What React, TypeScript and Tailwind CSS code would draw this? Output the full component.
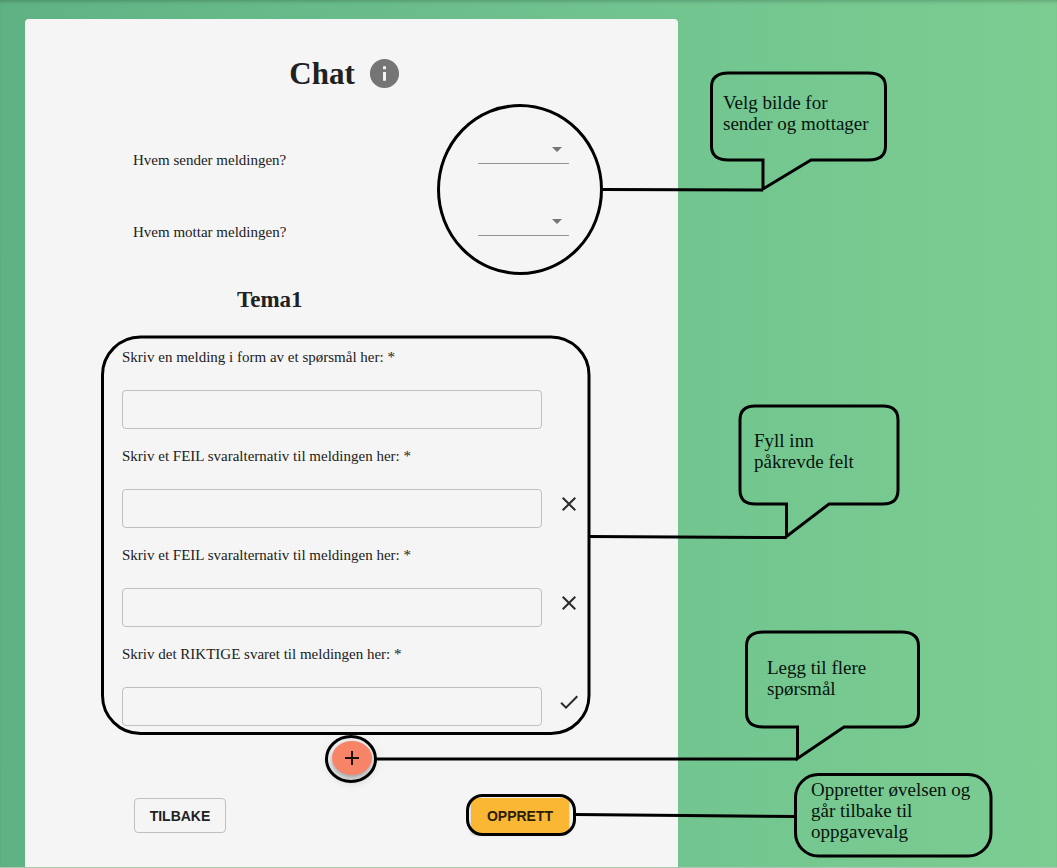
import type { ReactNode } from "react";

function Icon({ d, className }: { d: string; className: string }) {
  return (
    <svg viewBox="0 0 24 24" fill="currentColor" aria-hidden="true" className={className}>
      <path d={d} />
    </svg>
  );
}

const ICONS = {
  info: "M12 2C6.48 2 2 6.48 2 12s4.48 10 10 10 10-4.48 10-10S17.52 2 12 2zm1 15h-2v-6h2v6zm0-8h-2V7h2v2z",
  close:
    "M19 6.41L17.59 5 12 10.59 6.41 5 5 6.41 10.59 12 5 17.59 6.41 19 12 13.41 17.59 19 19 17.59 13.41 12z",
  check: "M9 16.17L4.83 12l-1.42 1.41L9 19 21 7l-1.41-1.41z",
  add: "M19 13h-6v6h-2v-6H5v-2h6V5h2v6h6v2z",
  arrow: "M7 10l5 5 5-5z",
};

function PersonSelect({ id, label }: { id: string; label: string }) {
  return (
    <div className="flex h-[72px] items-center justify-between">
      <label htmlFor={id} className="text-[15px] leading-6">
        {label}
      </label>
      <div className="relative mb-[26px] w-[91px] border-b border-[#949494] text-[#757575]">
        <select id={id} className="h-8 w-full appearance-none bg-transparent pr-6" defaultValue="">
          <option value=""></option>
        </select>
        <Icon d={ICONS.arrow} className="pointer-events-none absolute right-0 bottom-0.5 size-6" />
      </div>
    </div>
  );
}

function AnswerField({ id, label, icon }: { id: string; label: string; icon?: string }) {
  return (
    <div className="mb-[15px]">
      <label htmlFor={id} className="mb-[21px] block text-[15px] leading-6">
        {label} *
      </label>
      <div className="flex gap-[15px]">
        <input
          id={id}
          type="text"
          required
          className="h-[39px] min-w-0 flex-1 rounded border border-[#c0c0c0] bg-transparent px-3"
        />
        <span className="flex h-[30px] w-6 items-center text-[#2b2b2b]">
          {icon && <Icon d={icon} className="size-6" />}
        </span>
      </div>
    </div>
  );
}

function Note({ className, children }: { className: string; children: ReactNode }) {
  return (
    <p className={`absolute text-[19px] leading-[21px] whitespace-nowrap text-[#07130c] ${className}`}>
      {children}
    </p>
  );
}

function Annotations() {
  return (
    <div className="pointer-events-none absolute top-0 left-0">
      <svg width="1057" height="868" fill="none" stroke="#000" strokeWidth="3" aria-hidden="true">
        <ellipse cx="520" cy="189.5" rx="81.5" ry="84" />
        <path d="M602 189.5L763 190" />
        <path d="M728.5 73H868.5Q885.5 73 885.5 87V146Q885.5 160 868.5 160H811L763 189V160H728.5Q711.5 160 711.5 146V87Q711.5 73 728.5 73Z" />

        <rect x="102.5" y="337" width="486.5" height="396.5" rx="38" />
        <path d="M589 536.5L786.5 537.5" />
        <path d="M755 406H883Q898 406 898 420V490Q898 504 883 504H829L786.5 536.5V504H755Q740 504 740 490V420Q740 406 755 406Z" />

        <ellipse cx="351" cy="759" rx="24.5" ry="22.5" />
        <path d="M376 759H797.5" />
        <path d="M763.5 632H901.5Q918.5 632 918.5 646V713Q918.5 727 901.5 727H844L797.5 758.5V727H763.5Q746.5 727 746.5 713V646Q746.5 632 763.5 632Z" />

        <rect x="467.5" y="795.5" width="107" height="39" rx="15" />
        <path d="M575 814.5L795.5 816.5" />
        <rect x="795.5" y="774.5" width="195.5" height="81.5" rx="23" />
      </svg>
      <Note className="top-[92px] left-[723px]">
        Velg bilde for
        <br />
        sender og mottager
      </Note>
      <Note className="top-[430px] left-[754px]">
        Fyll inn
        <br />
        påkrevde felt
      </Note>
      <Note className="top-[657px] left-[767px]">
        Legg til flere
        <br />
        spørsmål
      </Note>
      <Note className="top-[779px] left-[811px]">
        Oppretter øvelsen og
        <br />
        går tilbake til
        <br />
        oppgavevalg
      </Note>
    </div>
  );
}

export default function App() {
  return (
    <div className="relative min-h-screen overflow-x-hidden border-b border-[#a9c9b3] bg-linear-to-r from-[#5fb284] via-[#71c48f] via-60% to-[#7ccd92] pt-[19px] pl-[25px] font-['Liberation_Serif',serif] text-[#212121] shadow-[inset_0_4px_4px_-3px_rgba(0,0,0,0.25)]">
      <main className="w-full max-w-[653px] rounded-t bg-[#f5f5f5] pt-[25px] pb-[34px]">
        <header className="flex items-center justify-center">
          <h1 className="text-[31px] leading-10 font-bold">Chat</h1>
          <button type="button" aria-label="Informasjon" className="p-3 text-[#757575]">
            <Icon d={ICONS.info} className="size-[35px]" />
          </button>
        </header>

        <div className="mt-[21px] pr-[109px] pl-[108px]">
          <PersonSelect id="sender" label="Hvem sender meldingen?" />
          <PersonSelect id="mottaker" label="Hvem mottar meldingen?" />
        </div>

        <h2 className="mt-4 pl-[212px] text-[23px] leading-8 font-bold">Tema1</h2>

        <form className="mt-[29px]">
          <div className="px-[97px]">
            <AnswerField id="sporsmal" label="Skriv en melding i form av et spørsmål her:" />
            <AnswerField
              id="feil-1"
              label="Skriv et FEIL svaralternativ til meldingen her:"
              icon={ICONS.close}
            />
            <AnswerField
              id="feil-2"
              label="Skriv et FEIL svaralternativ til meldingen her:"
              icon={ICONS.close}
            />
            <AnswerField
              id="riktig"
              label="Skriv det RIKTIGE svaret til meldingen her:"
              icon={ICONS.check}
            />
          </div>

          <div className="flex justify-center">
            <button
              type="button"
              aria-label="Legg til spørsmål"
              className="flex h-[34px] w-10 items-center justify-center rounded-[50%] bg-[#f88468] text-[#1c0f0c] shadow-[0_3px_5px_-1px_rgba(0,0,0,0.2),0_6px_10px_rgba(0,0,0,0.14),0_1px_18px_rgba(0,0,0,0.12)]"
            >
              <Icon d={ICONS.add} className="size-6" />
            </button>
          </div>

          <div className="mt-[23px] flex justify-between px-[109px] font-['Liberation_Sans',sans-serif] text-sm font-bold">
            <button type="button" className="h-[35px] w-[92px] rounded border border-[#c0c0c0]">
              TILBAKE
            </button>
            <button
              type="submit"
              className="h-[35px] w-[98px] rounded bg-[#f9b733] text-[#2b2005] shadow-[0_3px_1px_-2px_rgba(0,0,0,0.2),0_2px_2px_rgba(0,0,0,0.14),0_1px_5px_rgba(0,0,0,0.12)]"
            >
              OPPRETT
            </button>
          </div>
        </form>
      </main>
      <Annotations />
    </div>
  );
}
